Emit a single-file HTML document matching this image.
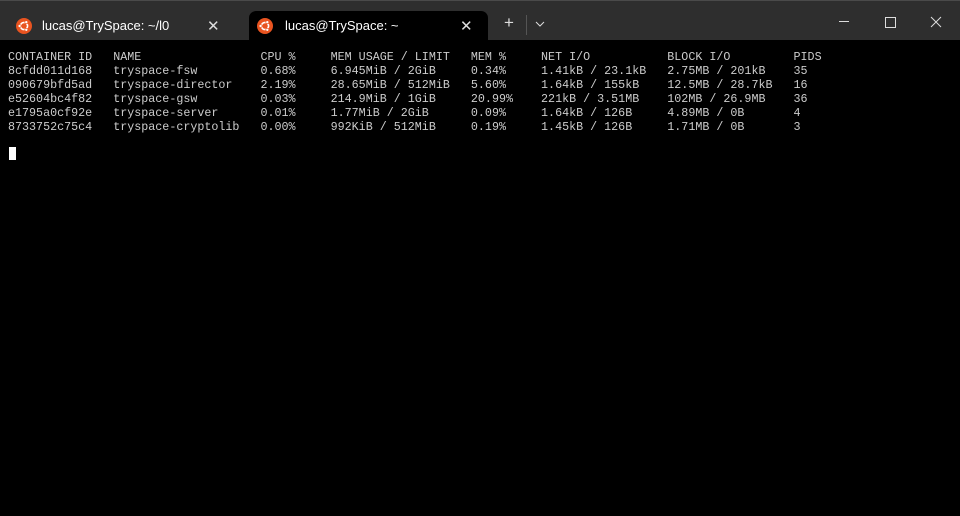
<!DOCTYPE html>
<html><head><meta charset="utf-8"><style>
body{margin:0;width:960px;height:516px;background:#0c0c0c;overflow:hidden;position:relative;font-family:"Liberation Sans",sans-serif}
.bar{position:absolute;left:0;top:0;width:960px;height:40px;background:#2e2e2e;border-top:1px solid #4a4a4a;box-sizing:border-box}
.term{position:absolute;left:0;top:40px;width:960px;height:476px;background:#000}
.tab{position:absolute;top:10px;height:30px;color:#fff;font-size:13px}
.tab.active{background:#000;border-radius:7px 7px 0 0}
.tab .t{position:absolute;left:36px;top:7px}
.tab .x{position:absolute;top:6px;font-size:15px;color:#ddd}
.ico{position:absolute;left:8px;top:7px;width:16px;height:16px}
pre{position:absolute;left:8px;top:50px;margin:0;font-family:"Liberation Mono",monospace;font-size:11.7px;line-height:14px;color:#cccccc}
.cur{position:absolute;left:9px;top:147px;width:7px;height:13px;background:#fff}
.wc{position:absolute;top:12px;color:#ddd;font-size:14px}
</style></head><body>
<div class="bar">
 <div class="tab" style="left:8px;width:240px">
  <svg class="ico" viewBox="0 0 16 16"><circle cx="8" cy="8" r="8" fill="#e95420"/><circle cx="8" cy="8" r="3.6" fill="none" stroke="#fff" stroke-width="1.6"/><circle cx="3.6" cy="8" r="1.5" fill="#fff" stroke="#e95420" stroke-width=".6"/><circle cx="10.3" cy="4.2" r="1.5" fill="#fff" stroke="#e95420" stroke-width=".6"/><circle cx="10.3" cy="11.8" r="1.5" fill="#fff" stroke="#e95420" stroke-width=".6"/></svg>
  <span class="t" style="left:34px">lucas@TrySpace: ~/l0</span><span class="x" style="left:199px">✕</span>
 </div>
 <div class="tab active" style="left:249px;width:239px">
  <svg class="ico" viewBox="0 0 16 16"><circle cx="8" cy="8" r="8" fill="#e95420"/><circle cx="8" cy="8" r="3.6" fill="none" stroke="#fff" stroke-width="1.6"/><circle cx="3.6" cy="8" r="1.5" fill="#fff" stroke="#e95420" stroke-width=".6"/><circle cx="10.3" cy="4.2" r="1.5" fill="#fff" stroke="#e95420" stroke-width=".6"/><circle cx="10.3" cy="11.8" r="1.5" fill="#fff" stroke="#e95420" stroke-width=".6"/></svg>
  <span class="t">lucas@TrySpace: ~</span><span class="x" style="left:211px">✕</span>
 </div>
 <span class="wc" style="left:504px;font-size:17px;top:12px">+</span>
 <div style="position:absolute;left:526px;top:14px;width:1px;height:20px;background:#555"></div>
 <svg style="position:absolute;left:535px;top:20px" width="10" height="6"><path d="M1 1 L5 5 L9 1" stroke="#ddd" fill="none"/></svg>
 <div style="position:absolute;left:839px;top:20px;width:10px;height:1px;background:#ddd"></div>
 <div style="position:absolute;left:885px;top:16px;width:9px;height:9px;border:1px solid #ddd"></div>
 <svg style="position:absolute;left:930px;top:15px" width="12" height="12"><path d="M1 1L11 11M11 1L1 11" stroke="#ddd"/></svg>
</div>
<div class="term"></div>
<pre>CONTAINER ID   NAME                 CPU %     MEM USAGE / LIMIT   MEM %     NET I/O           BLOCK I/O         PIDS
8cfdd011d168   tryspace-fsw         0.68%     6.945MiB / 2GiB     0.34%     1.41kB / 23.1kB   2.75MB / 201kB    35
090679bfd5ad   tryspace-director    2.19%     28.65MiB / 512MiB   5.60%     1.64kB / 155kB    12.5MB / 28.7kB   16
e52604bc4f82   tryspace-gsw         0.03%     214.9MiB / 1GiB     20.99%    221kB / 3.51MB    102MB / 26.9MB    36
e1795a0cf92e   tryspace-server      0.01%     1.77MiB / 2GiB      0.09%     1.64kB / 126B     4.89MB / 0B       4
8733752c75c4   tryspace-cryptolib   0.00%     992KiB / 512MiB     0.19%     1.45kB / 126B     1.71MB / 0B       3</pre>
<div class="cur"></div>
</body></html>
